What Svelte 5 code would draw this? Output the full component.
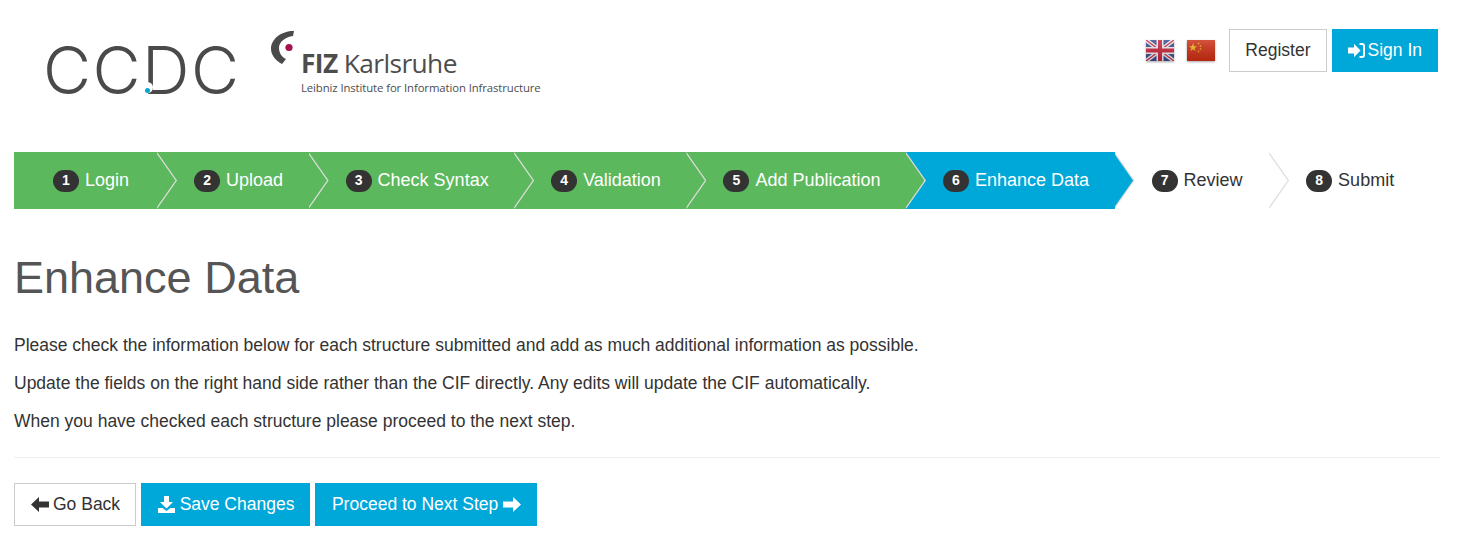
<script>
  const steps = [
    { label: 'Login', state: 'done' },
    { label: 'Upload', state: 'done' },
    { label: 'Check Syntax', state: 'done' },
    { label: 'Validation', state: 'done' },
    { label: 'Add Publication', state: 'done' },
    { label: 'Enhance Data', state: 'active' },
    { label: 'Review', state: 'todo' },
    { label: 'Submit', state: 'last' }
  ];
</script>

<div class="page">
  <header class="top">
    <div class="logos">
      <div class="ccdc">CCDC<span class="ccdc-dot"></span></div>
      <div class="fiz">
        <svg class="fiz-mark" width="30" height="38" viewBox="0 0 30 38">
          <path d="M23 1 C10 1 0 9 0 19 C0 25 5 31 11 34 L15 29 C11 27 8 23 8 18 C8 12 14 7 22 6 Z" fill="#4a4a4a" />
          <circle cx="18" cy="17.5" r="3.6" fill="#a6114f" />
        </svg>
        <div class="fiz-text">
          <div class="fiz-name"><b>FIZ</b> Karlsruhe</div>
          <div class="fiz-sub">Leibniz Institute for Information Infrastructure</div>
        </div>
      </div>
    </div>
    <div class="actions">
      <svg class="flag" width="28" height="21" viewBox="0 0 28 21">
        <defs>
          <linearGradient id="gloss" x1="0" y1="0" x2="0" y2="1">
            <stop offset="0" stop-color="#fff" stop-opacity="0.18" />
            <stop offset="1" stop-color="#000" stop-opacity="0.12" />
          </linearGradient>
        </defs>
        <rect width="28" height="21" fill="#3d4c8c" />
        <path d="M0 0 L28 21 M28 0 L0 21" stroke="#e8e8ef" stroke-width="4" />
        <path d="M0 0 L28 21 M28 0 L0 21" stroke="#c8243a" stroke-width="1.3" />
        <path d="M14 0 V21 M0 10.5 H28" stroke="#e8e8ef" stroke-width="7" />
        <path d="M14 0 V21 M0 10.5 H28" stroke="#c8243a" stroke-width="4" />
        <rect width="28" height="21" fill="url(#gloss)" />
      </svg>
      <svg class="flag cn" width="28" height="21" viewBox="0 0 28 21">
        <rect width="28" height="21" fill="#cc2d12" />
        <polygon points="6,3 7,6.2 10.2,6.2 7.6,8 8.6,11 6,9.2 3.4,11 4.4,8 1.8,6.2 5,6.2" fill="#eeb91e" />
        <circle cx="11.5" cy="3.5" r="0.9" fill="#e0961c" />
        <circle cx="13.5" cy="6" r="0.9" fill="#e0961c" />
        <circle cx="13.5" cy="9" r="0.9" fill="#e0961c" />
        <circle cx="11.5" cy="11.5" r="0.9" fill="#e0961c" />
        <rect width="28" height="21" fill="url(#gloss)" />
      </svg>
      <a class="btn btn-default" href="#register">Register</a>
      <a class="btn btn-primary" href="#signin">
        <svg class="icon" width="17" height="15" viewBox="0 0 17 15">
          <path d="M0 4.5 H6 V0.8 L12.5 7.5 L6 14.2 V10.5 H0 Z M11.5 0 H14 Q17 0 17 3 V12 Q17 15 14 15 H11.5 V13 H14 Q15 13 15 12 V3 Q15 2 14 2 H11.5 Z" fill="currentColor" />
        </svg>
        Sign In
      </a>
    </div>
  </header>

  <ol class="wizard">
    {#each steps as step, i}
      <li class="step {step.state}" style="z-index: {steps.length - i}">
        <span class="badge">{i + 1}</span>
        <span>{step.label}</span>
      </li>
    {/each}
  </ol>

  <h1>Enhance Data</h1>

  <p>Please check the information below for each structure submitted and add as much additional information as possible.</p>
  <p>Update the fields on the right hand side rather than the CIF directly. Any edits will update the CIF automatically.</p>
  <p>When you have checked each structure please proceed to the next step.</p>

  <hr />

  <div class="buttons">
    <a class="btn btn-default" href="#back">
      <svg class="icon" width="18" height="15" viewBox="0 0 18 15">
        <path d="M0 7.5 L8 0 V4.5 H18 V10.5 H8 V15 Z" fill="currentColor" />
      </svg>
      Go Back
    </a>
    <a class="btn btn-primary" href="#save">
      <svg class="icon" width="17" height="17" viewBox="0 0 17 17">
        <path d="M6 0 H11 V6 H15 L8.5 12.5 L2 6 H6 Z M0 12 H4.5 L8.5 15 L12.5 12 H17 V17 H0 Z" fill="currentColor" />
      </svg>
      Save Changes
    </a>
    <a class="btn btn-primary" href="#next">
      Proceed to Next Step
      <svg class="icon" width="18" height="15" viewBox="0 0 18 15">
        <path d="M18 7.5 L10 0 V4.5 H0 V10.5 H10 V15 Z" fill="currentColor" />
      </svg>
    </a>
  </div>
</div>

<style>
  :global(body) {
    margin: 0;
    background: #fff;
    color: #333;
    font-family: "Liberation Sans", Arial, sans-serif;
    font-size: 17.5px;
    line-height: 23px;
  }

  .page {
    padding: 0 32px 12px 14px;
  }

  /* Header */
  .top {
    display: flex;
    justify-content: space-between;
    height: 152px;
    box-sizing: border-box;
  }

  .logos {
    display: flex;
    align-items: flex-start;
    padding: 30px 0 0 29px;
  }

  .ccdc {
    position: relative;
    font-family: Inter, sans-serif;
    font-weight: 300;
    font-size: 66px;
    line-height: 80px;
    color: #4a4a4a;
    width: 194px;
    letter-spacing: 1.5px;
  }

  .ccdc-dot {
    position: absolute;
    left: 102px;
    top: 58px;
    width: 5px;
    height: 5px;
    border-radius: 50%;
    background: #00a7d9;
    box-shadow: 0 -3px 0 3px #fff;
  }

  .fiz {
    display: flex;
    margin-left: 34px;
    align-items: flex-start;
  }

  .fiz-text {
    padding: 16px 0 0 0;
    color: #4d4d4d;
  }

  .fiz-name {
    font-family: "Open Sans", sans-serif;
    font-size: 26.3px;
    line-height: 35px;
    letter-spacing: -0.6px;
  }

  .fiz-sub {
    font-family: "Open Sans", sans-serif;
    font-size: 11.35px;
    line-height: 14px;
    letter-spacing: -0.1px;
  }

  .actions {
    display: flex;
    align-items: flex-start;
    padding-top: 29px;
    margin-right: 2px;
  }

  .flag {
    margin: 11px 13px 0 0;
    filter: drop-shadow(0 1px 1px rgba(0, 0, 0, 0.35));
  }

  .cn {
    margin-right: 14px;
  }

  /* Buttons */
  .btn {
    display: inline-flex;
    align-items: center;
    gap: 5px;
    box-sizing: border-box;
    height: 43px;
    padding: 0 16px 0 16.5px;
    font-size: 17.5px;
    text-decoration: none;
    white-space: nowrap;
  }

  .btn-default {
    gap: 4px;
    padding: 0 15px 0 16px;
    border: 1px solid #ccc;
    background: #fff;
    color: #333;
  }

  .btn-primary {
    background: #00a7d9;
    color: #fff;
  }

  .actions .btn-default {
    padding: 0 15px;
  }

  .actions .btn-primary {
    gap: 3px;
    margin-left: 5px;
    padding: 0 16px;
  }

  /* Steps */
  .wizard {
    display: flex;
    list-style: none;
    margin: 0;
    padding: 0;
    height: 57px;
    font-size: 18px;
  }

  .step {
    position: relative;
    display: flex;
    align-items: center;
    gap: 6px;
    padding: 0 25.5px 0 37px;
  }

  .step:first-child {
    padding: 0 28px 0 39px;
  }

  .step::before,
  .step::after {
    content: "";
    position: absolute;
    top: 0;
    left: calc(100% - 1.5px);
    width: 20px;
    height: 100%;
    clip-path: polygon(0 0, 100% 50%, 0 100%);
  }

  .step::before {
    margin-left: 1.5px;
    background: #ddd;
  }

  .done {
    background: #5cb85c;
    color: #fff;
  }

  .done::after {
    background: #5cb85c;
  }

  .active {
    background: #00a7d9;
    color: #fff;
  }

  .active::after {
    background: #00a7d9;
  }

  .todo {
    padding-right: 26.5px;
  }

  .todo::after {
    background: #fff;
  }

  .last {
    padding-right: 0;
  }

  .last::before,
  .last::after {
    display: none;
  }

  .badge {
    display: inline-flex;
    align-items: center;
    justify-content: center;
    width: 26px;
    height: 22px;
    border-radius: 11px;
    background: #333;
    color: #fff;
    font-size: 14px;
    font-weight: bold;
  }

  /* Content */
  h1 {
    margin: 41px 0 29px;
    font-size: 45px;
    font-weight: 400;
    line-height: 55px;
    color: #555;
  }

  p {
    margin: 0 0 15px;
  }

  hr {
    margin: 24px 0 25px;
    border: 0;
    border-top: 1px solid #eee;
  }

  .buttons {
    display: flex;
    gap: 5px;
  }
</style>
